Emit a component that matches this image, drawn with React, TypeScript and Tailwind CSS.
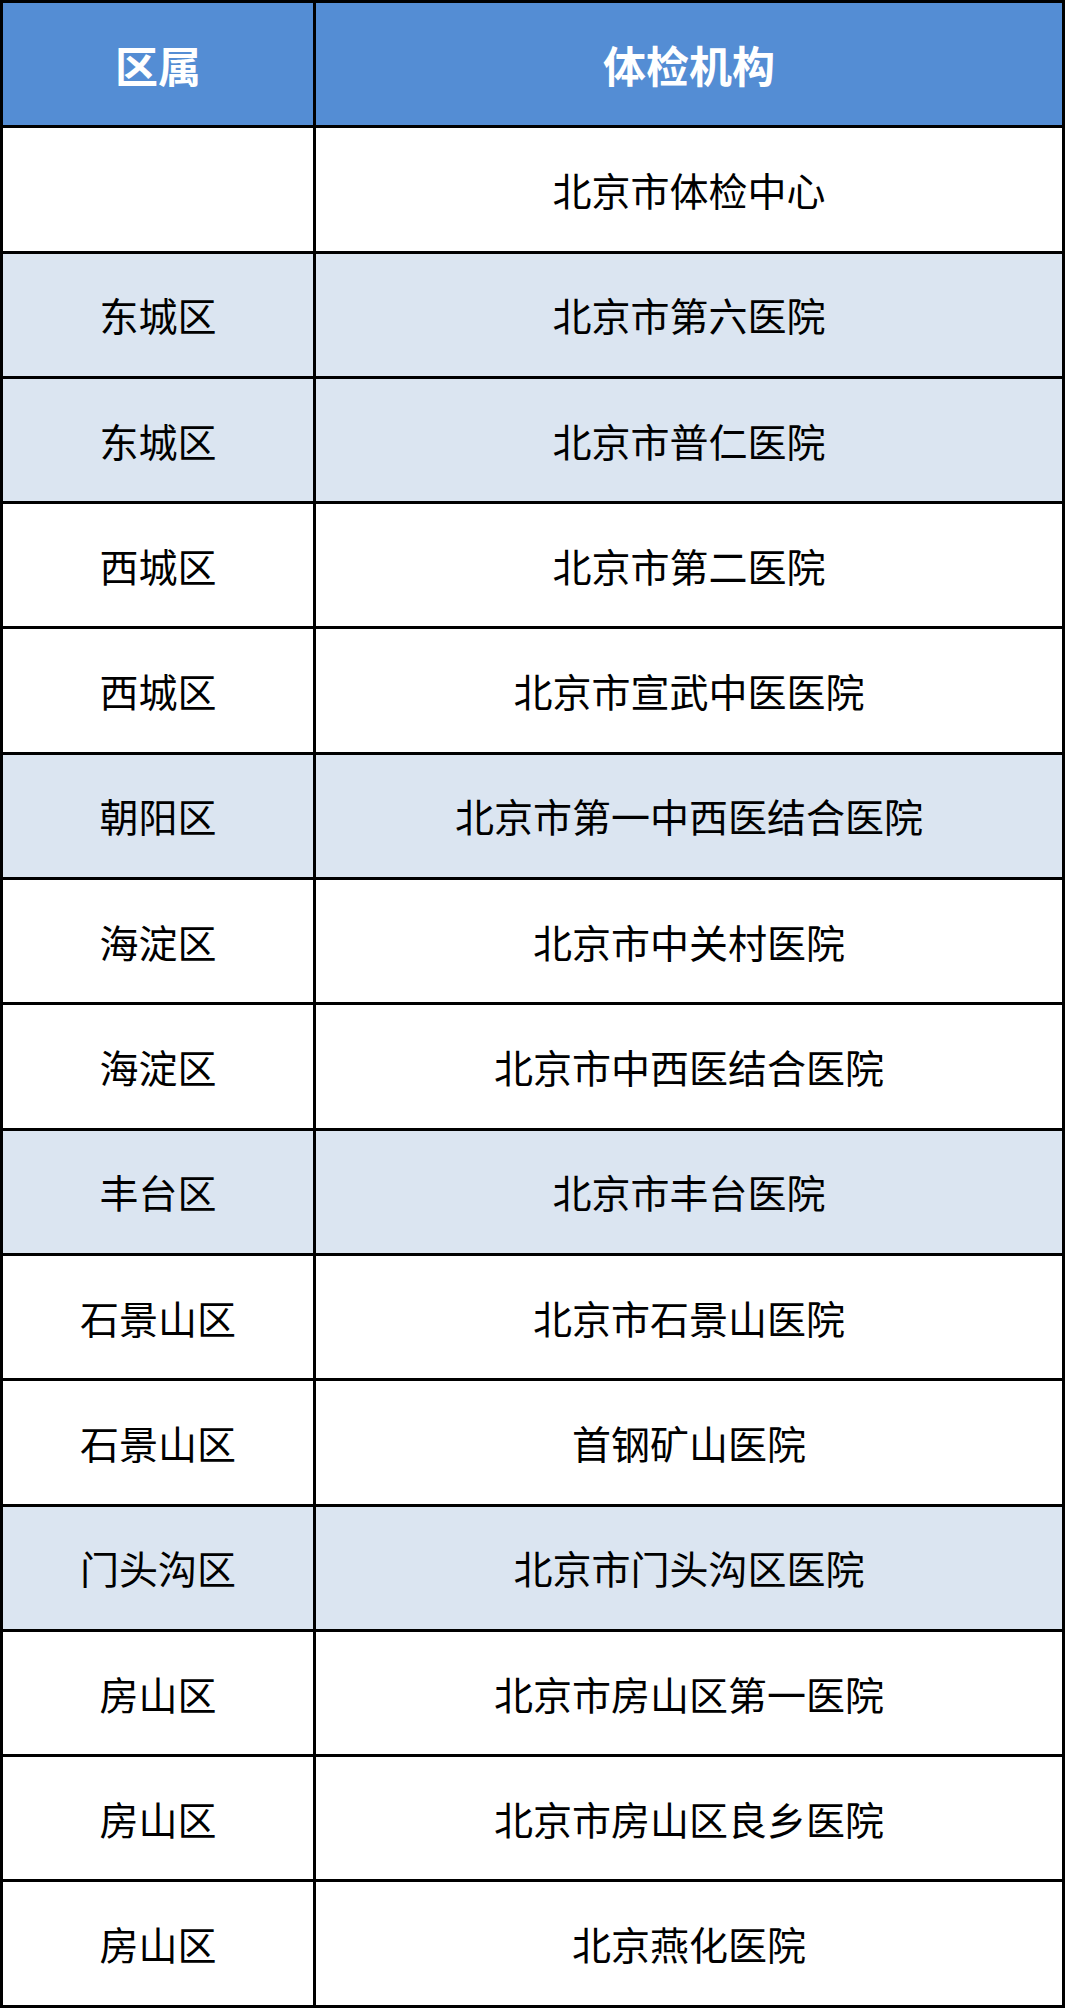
import React from "react";

const rows: { d: string; n: string; hl: boolean }[] = [
  { d: "", n: "北京市体检中心", hl: false },
  { d: "东城区", n: "北京市第六医院", hl: true },
  { d: "东城区", n: "北京市普仁医院", hl: true },
  { d: "西城区", n: "北京市第二医院", hl: false },
  { d: "西城区", n: "北京市宣武中医医院", hl: false },
  { d: "朝阳区", n: "北京市第一中西医结合医院", hl: true },
  { d: "海淀区", n: "北京市中关村医院", hl: false },
  { d: "海淀区", n: "北京市中西医结合医院", hl: false },
  { d: "丰台区", n: "北京市丰台医院", hl: true },
  { d: "石景山区", n: "北京市石景山医院", hl: false },
  { d: "石景山区", n: "首钢矿山医院", hl: false },
  { d: "门头沟区", n: "北京市门头沟区医院", hl: true },
  { d: "房山区", n: "北京市房山区第一医院", hl: false },
  { d: "房山区", n: "北京市房山区良乡医院", hl: false },
  { d: "房山区", n: "北京燕化医院", hl: false },
];

export default function App() {
  return (
    <div
      className="w-[1065px] bg-white"
      style={{ fontFamily: '"Noto Sans CJK SC", "Noto Sans", sans-serif' }}
    >
      <div className="border-[3px] border-black">
        <div className="grid grid-cols-[310px_3px_1fr] h-[122.3px] bg-[#548dd4] text-white font-bold text-[43px] leading-none">
          <div className="flex items-center justify-center">区属</div>
          <div className="bg-black" />
          <div className="flex items-center justify-center">体检机构</div>
        </div>
        {rows.map((r, i) => (
          <div key={i} className="border-t-[3px] border-black">
            <div
              className={
                "grid grid-cols-[310px_3px_1fr] h-[122.3px] text-black text-[39px] leading-none " +
                (r.hl ? "bg-[#dbe5f1]" : "bg-white")
              }
            >
              <div className="flex items-center justify-center">{r.d}</div>
              <div className="bg-black" />
              <div className="flex items-center justify-center">{r.n}</div>
            </div>
          </div>
        ))}
      </div>
    </div>
  );
}
